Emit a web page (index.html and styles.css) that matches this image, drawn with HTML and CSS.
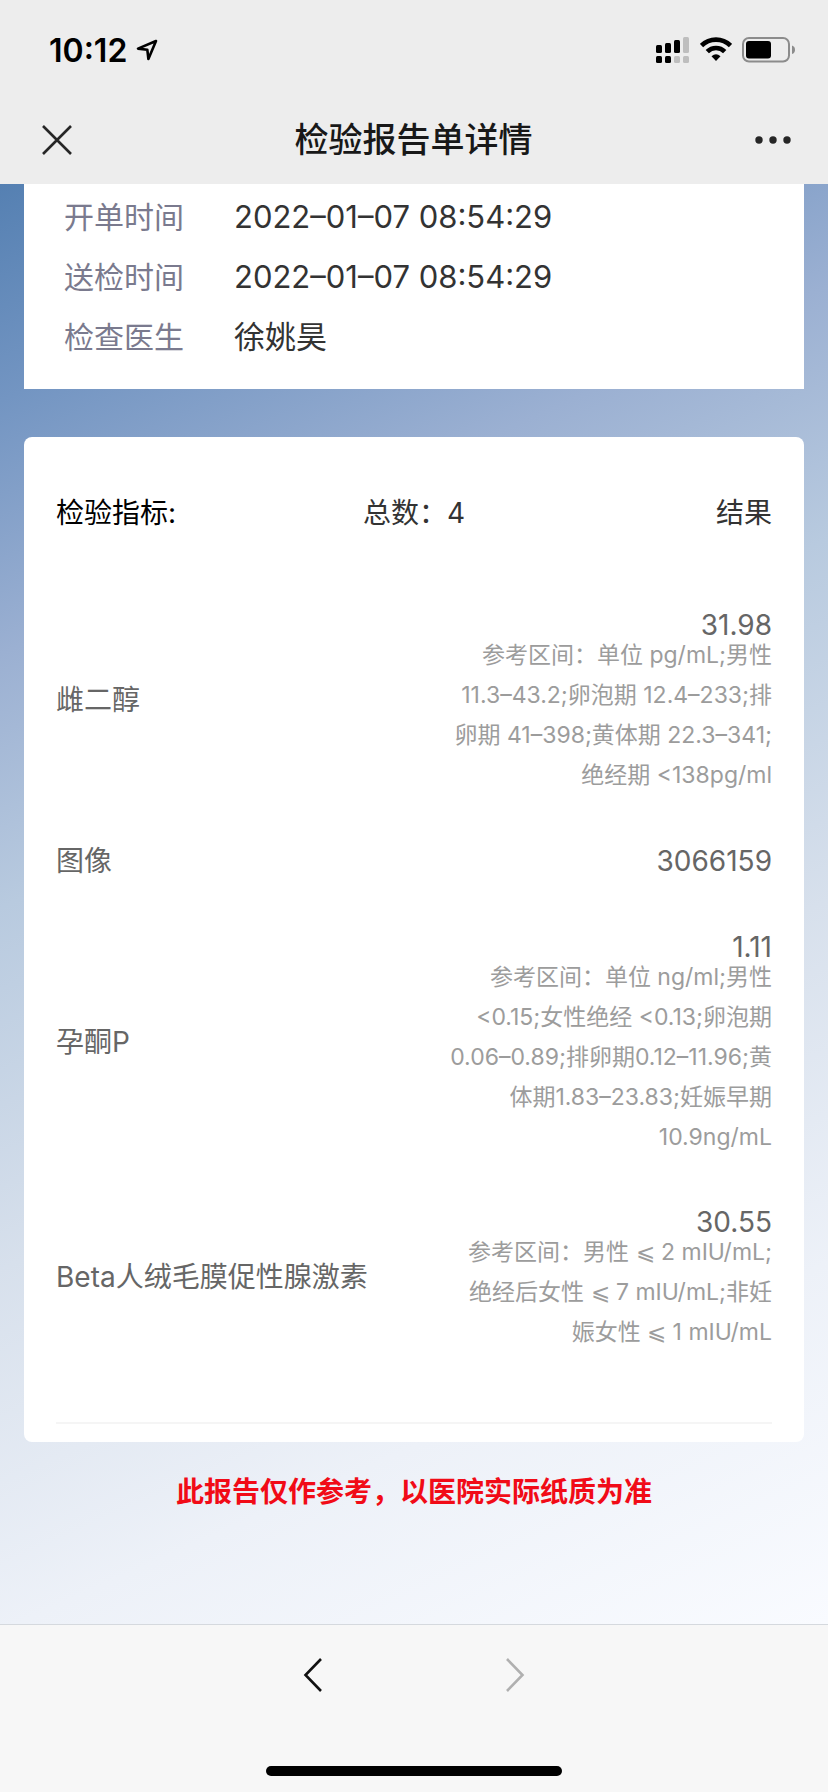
FILE: index.html
```html
<!DOCTYPE html>
<html lang="zh-CN">
<head>
    <meta charset="UTF-8">
    <meta name="viewport" content="width=device-width, initial-scale=1.0">
    <title>检验报告单详情</title>
    <link rel="stylesheet" href="styles.css">
</head>
<body>
    <header class="top-bar">
        <div class="status-bar">
            <div class="status-left">
                <span class="clock">10:12</span>
                <svg class="icon-location" width="22" height="22" viewBox="0 0 22 22" fill="none" stroke="#000" stroke-width="2.6" stroke-linejoin="round">
                    <path d="M20 2 L2 9.600 L11.300 10.700 L12.400 20 Z"/>
                </svg>
            </div>
            <div class="status-right">
                <svg width="34" height="26" viewBox="0 0 34 26">
                    <rect x="0" y="8" width="6" height="8" rx="1.500"/>
                    <rect x="9" y="6" width="6" height="10" rx="1.500"/>
                    <rect x="18" y="3" width="6" height="13" rx="1.500"/>
                    <rect x="27" y="0" width="6" height="16" rx="1.500" fill="#bebebe"/>
                    <rect x="0" y="19" width="6" height="7" rx="1.500"/>
                    <rect x="9" y="19" width="6" height="7" rx="1.500"/>
                    <rect x="18" y="19" width="6" height="7" rx="1.500" fill="#bebebe"/>
                    <rect x="27" y="19" width="6" height="7" rx="1.500" fill="#bebebe"/>
                </svg>
                <svg width="32" height="26" viewBox="0 0 32 26">
                    <path d="M1.500 8.600 A20.500 20.500 0 0 1 30.500 8.600" fill="none" stroke="#000" stroke-width="4.600"/>
                    <path d="M7.300 14.600 A12.200 12.200 0 0 1 24.700 14.600" fill="none" stroke="#000" stroke-width="4.600"/>
                    <path d="M11.500 19.200 Q16 15.500 20.500 19.200 L16 24 Z"/>
                </svg>
                <svg width="54" height="26" viewBox="0 0 54 26">
                    <rect x="1" y="1" width="46" height="23.500" rx="6" fill="none" stroke="#8c8c8c" stroke-width="2"/>
                    <rect x="4" y="4" width="25" height="17.500" rx="3"/>
                    <path d="M50 8.500 Q53 9.500 53 12.700 Q53 16 50 17 Z" fill="#8c8c8c"/>
                </svg>
            </div>
        </div>
        <div class="nav-bar">
            <button class="icon-button" type="button" aria-label="关闭">
                <svg width="30" height="30" viewBox="0 0 30 30" fill="none" stroke="#262626" stroke-width="2.600">
                    <path d="M1 1 L29 29 M29 1 L1 29"/>
                </svg>
            </button>
            <h1 class="nav-title">检验报告单详情</h1>
            <button class="icon-button" type="button" aria-label="更多">
                <svg width="36" height="8" viewBox="0 0 36 8" fill="#262626">
                    <circle cx="4" cy="4" r="3.700"/>
                    <circle cx="18" cy="4" r="3.700"/>
                    <circle cx="32" cy="4" r="3.700"/>
                </svg>
            </button>
        </div>
    </header>

    <main class="content">
        <dl class="card info-card">
            <dt>开单时间</dt>
            <dd>2022–01–07 08:54:29</dd>
            <dt>送检时间</dt>
            <dd>2022–01–07 08:54:29</dd>
            <dt>检查医生</dt>
            <dd>徐姚昊</dd>
        </dl>

        <section class="card result-card">
            <table class="result-table">
                <thead>
                    <tr>
                        <th class="col-name">检验指标:</th>
                        <th class="col-count">总数：4</th>
                        <th class="col-result">结果</th>
                    </tr>
                </thead>
                <tbody>
                    <tr>
                        <td>雌二醇</td>
                        <td colspan="2">
                            <div class="value with-range">31.98</div>
                            <div class="range">参考区间：单位 pg/mL;男性<br>11.3–43.2;卵泡期 12.4–233;排<br>卵期 41–398;黄体期 22.3–341;<br>绝经期 &lt;138pg/ml</div>
                        </td>
                    </tr>
                    <tr>
                        <td>图像</td>
                        <td colspan="2">
                            <div class="value">3066159</div>
                        </td>
                    </tr>
                    <tr>
                        <td>孕酮P</td>
                        <td colspan="2">
                            <div class="value with-range">1.11</div>
                            <div class="range">参考区间：单位 ng/ml;男性<br>&lt;0.15;女性绝经 &lt;0.13;卵泡期<br>0.06–0.89;排卵期0.12–11.96;黄<br>体期1.83–23.83;妊娠早期<br>10.9ng/mL</div>
                        </td>
                    </tr>
                    <tr>
                        <td>Beta人绒毛膜促性腺激素</td>
                        <td colspan="2">
                            <div class="value with-range">30.55</div>
                            <div class="range">参考区间：男性 ⩽ 2 mIU/mL;<br>绝经后女性 ⩽ 7 mIU/mL;非妊<br>娠女性 ⩽ 1 mIU/mL</div>
                        </td>
                    </tr>
                </tbody>
            </table>
        </section>

        <p class="notice">此报告仅作参考，以医院实际纸质为准</p>
    </main>

    <footer class="bottom-bar">
        <div class="history">
            <button class="icon-button" type="button" aria-label="后退">
                <svg width="20" height="36" viewBox="0 0 20 36" fill="none" stroke="#111" stroke-width="2.600">
                    <path d="M18 2 L2.500 18 L18 34"/>
                </svg>
            </button>
            <button class="icon-button" type="button" aria-label="前进" disabled>
                <svg width="20" height="36" viewBox="0 0 20 36" fill="none" stroke="#b0b0b0" stroke-width="2.600">
                    <path d="M2 2 L17.500 18 L2 34"/>
                </svg>
            </button>
        </div>
        <div class="home-indicator"></div>
    </footer>
</body>
</html>
```
FILE: styles.css
```css
:root {
    --bar-bg: #ededed;
    --text-color: #333;
    --label-color: #7a7a8e;
    --muted-color: #666;
    --range-color: #9c9c9c;
    --notice-color: #f10b17;
}

* {
    box-sizing: border-box;
}

body {
    display: flex;
    flex-direction: column;
    min-height: 100vh;
    margin: 0;
    font-family: Inter, "Noto Sans CJK SC", sans-serif;
    font-size: 28px;
    color: var(--text-color);
}

.icon-button {
    display: flex;
    padding: 0;
    border: 0;
    background: none;
}

/* top bar */
.top-bar {
    background: var(--bar-bg);
}

.status-bar {
    display: flex;
    justify-content: space-between;
    align-items: center;
    height: 96px;
    padding: 4px 32px 0 49px;
}

.status-left {
    display: flex;
    align-items: center;
    gap: 9px;
}

.clock {
    font-size: 32px;
    font-weight: 600;
    color: #000;
}

.status-right {
    display: flex;
    align-items: center;
    gap: 10px;
}

.nav-bar {
    display: flex;
    justify-content: space-between;
    align-items: center;
    height: 88px;
    padding: 0 37px 0 42px;
}

.nav-title {
    margin: 0;
    font-size: 34px;
    font-weight: 500;
    line-height: 48px;
    color: #181818;
}

/* report */
.content {
    flex: 1;
    padding: 0 24px;
    background: linear-gradient(156deg, #5580b2 0%, #7395c2 12%, #9bb0d2 26%, #b8cadf 40%, #d7e0ec 60%, #edf1f8 80%, #f9fbff 100%);
}

.card {
    background: #fff;
}

.info-card {
    display: grid;
    grid-template-columns: 170px 1fr;
    margin: 0 0 48px;
    padding: 3px 40px 22px;
    font-size: 30px;
    line-height: 60px;
}

.info-card dt {
    color: var(--label-color);
}

.info-card dd {
    margin: 0;
    font-size: 31px;
}

.result-card {
    padding: 48px 32px 18px;
    border-radius: 8px;
}

.result-table {
    width: 100%;
    table-layout: fixed;
    border-collapse: collapse;
    border-bottom: 2px solid #f5f5f5;
    white-space: nowrap;
}

.result-table th {
    padding: 0 0 64px;
    font-weight: 400;
    line-height: 56px;
}

.result-table .col-name {
    text-align: left;
    color: #000;
}

.result-table .col-count {
    text-align: center;
}

.result-table .col-result {
    text-align: right;
}

.result-table td {
    padding: 0 0 45px;
    line-height: 42px;
    color: var(--muted-color);
}

.result-table td + td {
    text-align: right;
}

.result-table tr:last-child td {
    padding-bottom: 70px;
}

.value.with-range {
    padding-top: 10px;
    line-height: 20px;
}

.range {
    font-size: 23px;
    line-height: 40px;
    color: var(--range-color);
}

.notice {
    margin: 30px 0;
    font-weight: 700;
    line-height: 40px;
    text-align: center;
    color: var(--notice-color);
}

/* bottom bar */
.bottom-bar {
    padding: 32px 0 16px;
    border-top: 1px solid #d5d9de;
    background: #f7f7f7;
}

.history {
    display: flex;
    justify-content: center;
    gap: 182px;
}

.home-indicator {
    width: 296px;
    height: 10px;
    margin: 73px auto 0;
    border-radius: 5px;
    background: #000;
}
```
